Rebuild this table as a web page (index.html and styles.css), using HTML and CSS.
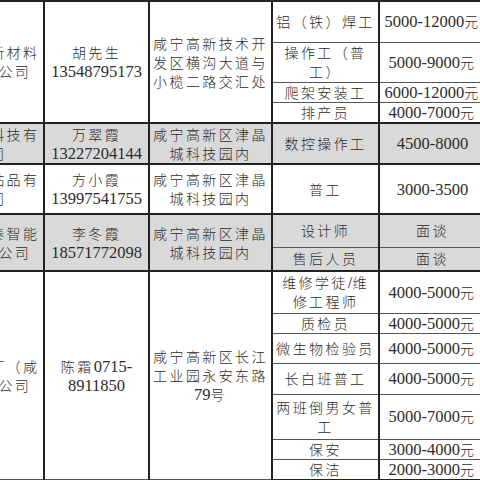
FILE: index.html
```html
<!DOCTYPE html>
<html lang="zh-CN">
<head>
<meta charset="utf-8">
<title>招聘信息</title>
<link rel="stylesheet" href="styles.css">
</head>
<body>
<table class="sheet">
  <colgroup>
    <col class="c-company">
    <col class="c-contact">
    <col class="c-address">
    <col class="c-job">
    <col class="c-pay">
  </colgroup>
  <tbody>
    <tr class="group h41">
      <td rowspan="4">湖北鼎盛新材料<br>科技有限公司</td>
      <td rowspan="4">胡先生<br><span class="num">13548795173</span></td>
      <td rowspan="4">咸宁高新技术开<br>发区横沟大道与<br>小榄二路交汇处</td>
      <td>铝（铁）焊工</td>
      <td><span class="num">5000-12000</span>元</td>
    </tr>
    <tr class="h40">
      <td>操作工（普<br>工）</td>
      <td><span class="num">5000-9000</span>元</td>
    </tr>
    <tr class="h20">
      <td>爬架安装工</td>
      <td><span class="num">6000-12000</span>元</td>
    </tr>
    <tr class="h21">
      <td>排产员</td>
      <td><span class="num">4000-7000</span>元</td>
    </tr>

    <tr class="group gray h41">
      <td>湖北优创科技有<br>限公司</td>
      <td>万翠霞<br><span class="num">13227204144</span></td>
      <td>咸宁高新区津晶<br>城科技园内</td>
      <td>数控操作工</td>
      <td><span class="num">4500-8000</span></td>
    </tr>

    <tr class="group h50">
      <td>湖北宏达钻品有<br>限公司</td>
      <td>方小霞<br><span class="num">13997541755</span></td>
      <td>咸宁高新区津晶<br>城科技园内</td>
      <td>普工</td>
      <td><span class="num">3000-3500</span></td>
    </tr>

    <tr class="group gray h33">
      <td rowspan="2">咸宁市鑫泰智能<br>科技有限公司</td>
      <td rowspan="2">李冬霞<br><span class="num">18571772098</span></td>
      <td rowspan="2">咸宁高新区津晶<br>城科技园内</td>
      <td>设计师</td>
      <td>面谈</td>
    </tr>
    <tr class="gray h24">
      <td>售后人员</td>
      <td>面谈</td>
    </tr>

    <tr class="group h42">
      <td rowspan="7">达利食品厂（咸<br>宁）有限公司</td>
      <td rowspan="7">陈霜<span class="num">0715-<br>8911850</span></td>
      <td rowspan="7">咸宁高新区长江<br>工业园永安东路<br><span class="num">79</span>号</td>
      <td>维修学徒<span class="num">/</span>维<br>修工程师</td>
      <td><span class="num">4000-5000</span>元</td>
    </tr>
    <tr class="h20">
      <td>质检员</td>
      <td><span class="num">4000-5000</span>元</td>
    </tr>
    <tr class="h30">
      <td>微生物检验员</td>
      <td><span class="num">4000-5000</span>元</td>
    </tr>
    <tr class="h31">
      <td>长白班普工</td>
      <td><span class="num">4000-5000</span>元</td>
    </tr>
    <tr class="h45">
      <td>两班倒男女普<br>工</td>
      <td><span class="num">5000-7000</span>元</td>
    </tr>
    <tr class="h20">
      <td>保安</td>
      <td><span class="num">3000-4000</span>元</td>
    </tr>
    <tr class="h20">
      <td>保洁</td>
      <td><span class="num">2000-3000</span>元</td>
    </tr>
  </tbody>
</table>
</body>
</html>
```

FILE: styles.css
```css
html, body {
  margin: 0;
  padding: 0;
  background: #ffffff;
}

body {
  overflow: hidden;
  width: 480px;
  height: 480px;
}

.sheet {
  border-collapse: collapse;
  table-layout: fixed;
  width: 566px;
  margin-left: -81px;
  color: #2b2b2b;
  font-family: "Noto Sans CJK SC", "Liberation Serif", sans-serif;
  font-size: 14px;
  font-weight: 300;
  letter-spacing: 2.4px;
  line-height: 19px;
}

.c-company { width: 124px; }
.c-contact { width: 105px; }
.c-address { width: 123px; }
.c-job { width: 107px; }
.c-pay { width: 107px; }

.sheet td {
  padding: 0;
  text-align: center;
  vertical-align: middle;
  white-space: nowrap;
  overflow: hidden;
  border-top: 1px solid #555555;
  border-bottom: 1px solid #555555;
  border-left: 2px solid #222222;
  border-right: 2px solid #222222;
}

.sheet tr.group td {
  border-top: 2px solid #222222;
}

.sheet tr:first-child td {
  border-top: 2px solid #222222;
}

.sheet tr:last-child td {
  border-bottom: 2px solid #222222;
}

.gray td {
  background: #d9d9d9;
}

.num {
  font-family: "Liberation Serif", serif;
  font-size: 16.5px;
  font-weight: 400;
  letter-spacing: 0;
}

.h20 { height: 20px; }
.h21 { height: 21px; }
.h24 { height: 24px; }
.h30 { height: 30px; }
.h31 { height: 31px; }
.h33 { height: 33px; }
.h40 { height: 40px; }
.h41 { height: 41px; }
.h42 { height: 42px; }
.h45 { height: 45px; }
.h50 { height: 50px; }
```
